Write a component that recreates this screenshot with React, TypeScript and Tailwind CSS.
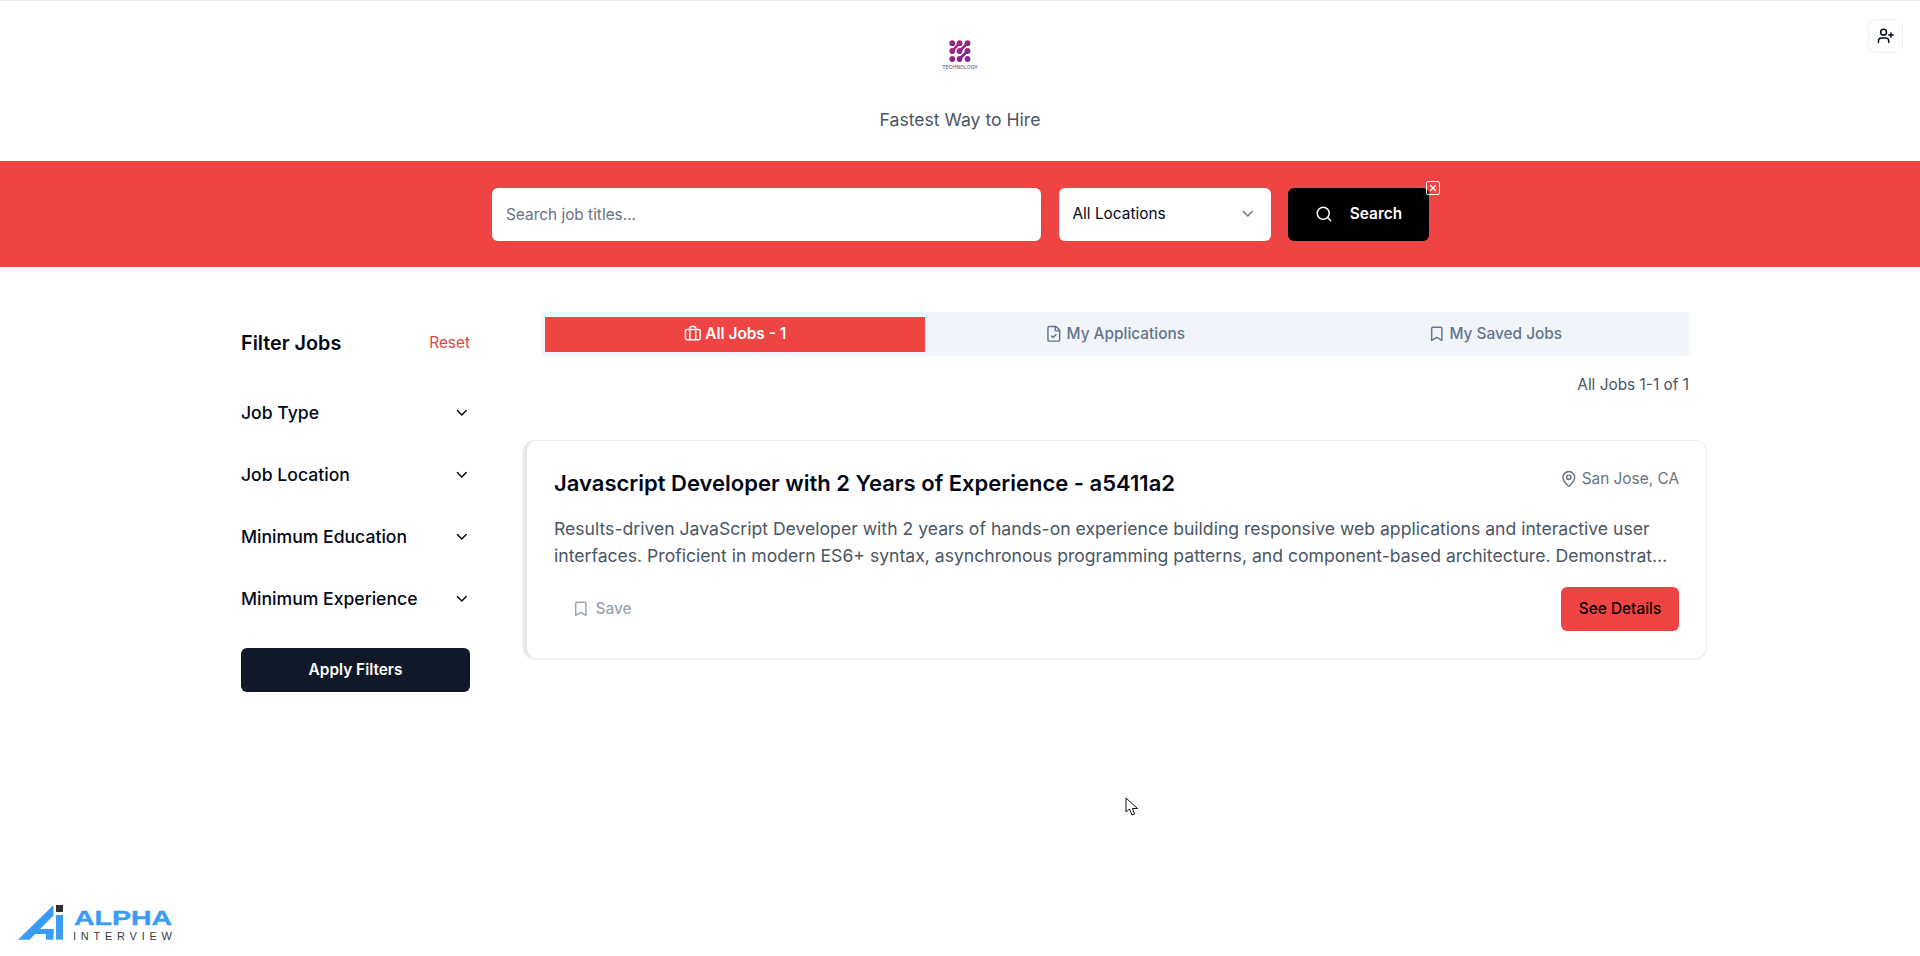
import { Bookmark, Briefcase, ChevronDown, FileCheck, MapPin, Search, UserPlus, X } from "lucide-react";

const filters = ["Job Type", "Job Location", "Minimum Education", "Minimum Experience"];

function CompanyLogo() {
  return (
    <div className="flex flex-col items-center">
      <svg width="22" height="23" viewBox="0 0 22 23" className="block">
        <defs>
          <linearGradient id="tech" x1="0" y1="0" x2="1" y2="1">
            <stop offset="0" stopColor="#c4267f" />
            <stop offset="1" stopColor="#5b2a94" />
          </linearGradient>
        </defs>
        <g fill="url(#tech)" stroke="url(#tech)" strokeLinecap="round">
          <circle cx="3.2" cy="3.2" r="2.9" stroke="none" />
          <circle cx="10.5" cy="3.2" r="2.9" stroke="none" />
          <circle cx="18.5" cy="3.2" r="2.9" stroke="none" />
          <circle cx="3.2" cy="11" r="2.9" stroke="none" />
          <circle cx="10.5" cy="11" r="2.9" stroke="none" />
          <circle cx="18.5" cy="11" r="2.9" stroke="none" />
          <circle cx="3.2" cy="19" r="2.9" stroke="none" />
          <circle cx="10.5" cy="19" r="2.9" stroke="none" />
          <circle cx="18.5" cy="19" r="2.9" stroke="none" />
          <path d="M18.5 3.2 L10.5 11 M18.5 11 L10.5 19 M10.5 3.2 L3.2 11" strokeWidth="2.6" fill="none" />
        </g>
      </svg>
      <span className="mt-[1px] text-[5px] leading-[6px] tracking-[0.1px] text-[#4a3a80]">TECHNOLOGY</span>
    </div>
  );
}

function AlphaLogo() {
  return (
    <svg width="160" height="40" viewBox="16 12 160 40" className="block">
      <path d="M18 49.7 L53.5 15 L53.5 25.5 L29.5 49.7 Z" fill="#3b9cf5" />
      <path d="M35 39 L53.5 39 L53.5 44 L30 44 Z" fill="#3b9cf5" />
      <path d="M53.5 39 L53.5 49.7 L46 49.7 L46 39 Z" fill="#3b9cf5" />
      <rect x="56" y="25" width="7" height="24.7" fill="#3b9cf5" />
      <rect x="56" y="15" width="7" height="7" fill="#333333" />
      <text x="74" y="34.5" fontSize="21" fontWeight="700" fontFamily="'Liberation Sans', sans-serif" fill="#3b9cf5" stroke="#3b9cf5" strokeWidth="0.4" textLength="98" lengthAdjust="spacingAndGlyphs">
        ALPHA
      </text>
      <text x="73" y="49.5" fontSize="11" fontWeight="400" fontFamily="'Liberation Sans', sans-serif" fill="#3a3a3a" textLength="99" lengthAdjust="spacing">
        INTERVIEW
      </text>
    </svg>
  );
}

function Tab({ icon, label, active }: { icon: React.ReactNode; label: string; active?: boolean }) {
  return (
    <div
      className={
        active
          ? "flex flex-1 items-center justify-center gap-[4px] bg-[#ef4444] pb-[1px] text-[15.4px] font-semibold text-white"
          : "flex flex-1 items-center justify-center gap-[4px] pb-[1px] text-[15.4px] font-medium text-[#64748b]"
      }
    >
      {icon}
      {label}
    </div>
  );
}

export default function App() {
  return (
    <div className="relative flex h-[956px] flex-col overflow-hidden border-t border-[#e5e7eb] bg-white font-['Inter',sans-serif] text-[#020817]">
      <button className="absolute right-[17px] top-[18px] flex h-[34px] w-[35px] items-center justify-center rounded-lg border border-[#eceef1] bg-white">
        <UserPlus className="h-[17.6px] w-[17.6px]" />
      </button>

      <header className="flex h-[160px] flex-col items-center pt-[39px]">
        <CompanyLogo />
        <p className="mt-[36px] text-[17.6px] leading-[28px] text-[#4b5563]">Fastest Way to Hire</p>
      </header>

      <div className="flex h-[106px] items-center justify-center gap-[17.5px] bg-[#ef4444] pl-[1px]">
        <div className="flex h-[53px] w-[549px] items-center rounded-md bg-white px-[14px] pt-[2px] text-[15.4px] text-[#6b7280]">
          Search job titles...
        </div>
        <div className="flex h-[53px] w-[212px] items-center justify-between rounded-md bg-white px-[14px] text-[15.4px]">
          All Locations
          <ChevronDown className="h-[17.6px] w-[17.6px] text-[#6b7280]" />
        </div>
        <div className="relative flex h-[53px] w-[141px] items-center justify-center gap-[17px] rounded-md bg-black text-[15.4px] font-semibold text-white">
          <Search className="h-[18px] w-[18px]" />
          Search
          <span className="absolute -right-[11px] -top-[7px] flex h-[14px] w-[14px] items-center justify-center rounded-[2px] border border-white">
            <X className="h-[10px] w-[10px]" strokeWidth={3} />
          </span>
        </div>
      </div>

      <div className="flex gap-[53px] pl-[241px] pr-[213px] pt-[45px]">
        <aside className="w-[229px] shrink-0 pt-[19px]">
          <div className="flex h-[24px] items-center justify-between">
            <h2 className="pt-[2px] text-[19.8px] font-semibold">Filter Jobs</h2>
            <span className="text-[15.4px] text-[#e04444]">Reset</span>
          </div>
          <div className="mt-[27px]">
            {filters.map((f) => (
              <div key={f} className="flex h-[62px] items-center justify-between text-[17.6px] font-medium">
                {f}
                <ChevronDown className="-mr-[1px] h-[17.6px] w-[17.6px]" />
              </div>
            ))}
          </div>
          <button className="mt-[18px] h-[44px] w-full rounded-md bg-[#111827] text-[15.4px] font-semibold text-white">
            Apply Filters
          </button>
        </aside>

        <main className="min-w-0 flex-1">
          <div className="mx-[18px] flex h-[44px] bg-[#f1f5f9] pb-[4px] pl-[4px] pr-[4px] pt-[5px]">
            <Tab active icon={<Briefcase className="h-[17.6px] w-[17.6px]" />} label="All Jobs - 1" />
            <Tab icon={<FileCheck className="h-[17.6px] w-[17.6px]" />} label="My Applications" />
            <Tab icon={<Bookmark className="h-[17.6px] w-[17.6px]" />} label="My Saved Jobs" />
          </div>
          <p className="mr-[18px] mt-[19px] text-right text-[15.4px] leading-[20px] text-[#4b5563]">All Jobs 1-1 of 1</p>

          <article className="mt-[45px] h-[219px] rounded-xl border border-l-4 border-[#ebedf0] border-l-[#e5e8ea] bg-white pl-[27px] pr-[27px] shadow-xs">
            <div className="flex items-start justify-between pt-[28px]">
              <h3 className="text-[22px] font-semibold leading-[28px]">
                Javascript Developer with 2 Years of Experience - a5411a2
              </h3>
              <div className="flex items-center gap-[4px] text-[15.4px] leading-[20px] text-[#6b7280]">
                <MapPin className="h-[17.6px] w-[17.6px]" />
                San Jose, CA
              </div>
            </div>
            <p className="mr-[6px] mt-[18px] line-clamp-2 text-[17.6px] leading-[27px] text-[#4b5563]">
              Results-driven JavaScript Developer with 2 years of hands-on experience building responsive web applications and
              interactive user interfaces. Proficient in modern ES6+ syntax, asynchronous programming patterns, and
              component-based architecture. Demonstrated expertise in debugging, testing and shipping production features with
              cross-functional teams across the full product lifecycle.
            </p>
            <div className="mt-[18px] flex items-center justify-between">
              <div className="flex items-center gap-[6px] pl-[18px] text-[15.4px] font-medium text-[#9ca3af]">
                <Bookmark className="h-[17.6px] w-[17.6px]" />
                Save
              </div>
              <button className="h-[44px] w-[118px] rounded-md bg-[#ef4444] text-[15.4px] font-medium text-black">See Details</button>
            </div>
          </article>
        </main>
      </div>

      <div className="mt-auto pb-[14px] pl-[16px]">
        <AlphaLogo />
      </div>

      <svg width="14" height="20" viewBox="0 0 14 20" className="absolute left-[1125px] top-[796px]">
        <path d="M1 1 L1 15 L4.5 12 L7 18 L9.5 17 L7.5 11.5 L12.5 11.5 Z" fill="#fff" stroke="#111" strokeWidth="1" />
      </svg>
    </div>
  );
}
